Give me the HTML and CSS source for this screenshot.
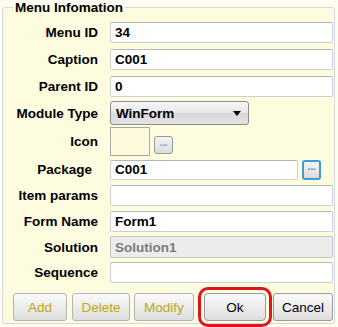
FILE: index.html
```html
<!DOCTYPE html>
<html lang="en">
<head>
  <meta charset="UTF-8">
  <title>Menu Infomation</title>
  <link rel="stylesheet" href="styles.css">
</head>
<body>

<fieldset class="group">
  <legend>Menu Infomation</legend>

  <div class="form">
    <label class="lbl">Menu ID</label>
    <input class="txt" type="text" value="34">

    <label class="lbl">Caption</label>
    <input class="txt" type="text" value="C001">

    <label class="lbl">Parent ID</label>
    <input class="txt" type="text" value="0">

    <label class="lbl">Module Type</label>
    <div class="combo">
      <span>WinForm</span>
      <span class="arrow"></span>
    </div>

    <label class="lbl">Icon</label>
    <div class="icon-cell">
      <div class="icon-box"></div>
      <button class="dots">&middot;&middot;&middot;</button>
    </div>

    <label class="lbl lbl-pkg">Package</label>
    <div class="pkg-cell">
      <input class="txt pkg" type="text" value="C001">
      <button class="dots dots-focus">&middot;&middot;&middot;</button>
    </div>

    <label class="lbl">Item params</label>
    <input class="txt" type="text" value="">

    <label class="lbl">Form Name</label>
    <input class="txt" type="text" value="Form1">

    <label class="lbl">Solution</label>
    <input class="txt txt-off" type="text" value="Solution1" disabled>

    <label class="lbl">Sequence</label>
    <input class="txt" type="text" value="">
  </div>

  <div class="actions">
    <button class="btn btn-off w-add">Add</button>
    <button class="btn btn-off w-del">Delete</button>
    <button class="btn btn-off w-mod">Modify</button>
    <button class="btn btn-ok">Ok</button>
    <button class="btn w-cancel">Cancel</button>
  </div>
</fieldset>

</body>
</html>
```

FILE: styles.css
```css
body {
  margin: 0;
  background: #fdfdf2;
  font-family: "Liberation Sans", Arial, sans-serif;
  font-size: 13.5px;
  color: #000;
}
.group {
  margin: 0 3px 3px 2px;
  padding: 3px 1px 1px 5px;
  border: 1px solid #cfd9df;
  border-radius: 3px;
  background: #fefcdf;
  height: 324px;
  box-sizing: border-box;
}
.group legend {
  margin-left: 5px;
  padding: 0 2px;
  font-weight: bold;
  line-height: 15px;
}
.form {
  display: grid;
  grid-template-columns: 90px 1fr;
  grid-template-rows: 28px 27px 26px 28px 29px 27px 25px 26px 26px 24px;
  column-gap: 12px;
  align-items: center;
}
.lbl {
  text-align: right;
  font-weight: bold;
  white-space: nowrap;
}
.lbl-pkg {
  padding-right: 6px;
}
.txt {
  box-sizing: border-box;
  width: 223px;
  height: 21px;
  margin: 0;
  padding: 0 4px;
  border: 1px solid #cbcfd3;
  border-top-color: #b3b7bb;
  border-radius: 2px;
  background: #fff;
  font: bold 13.5px "Liberation Sans", Arial, sans-serif;
  color: #000;
}
.txt-off {
  height: 22px;
  background: #ececec;
  color: #7a7a7a;
  border-color: #c4c4c4;
}
.combo {
  box-sizing: border-box;
  width: 139px;
  height: 24px;
  display: flex;
  align-items: center;
  justify-content: space-between;
  padding: 0 7px 0 5px;
  border: 1px solid #8a8a8a;
  border-radius: 3px;
  background: linear-gradient(#f7f7f7, #e6e6e6 50%, #d9d9d9 51%, #e3e3e3);
  font-weight: bold;
}
.arrow {
  width: 0;
  height: 0;
  border-left: 4px solid transparent;
  border-right: 4px solid transparent;
  border-top: 5px solid #000;
}
.icon-cell {
  display: flex;
  align-items: flex-end;
  height: 29px;
  gap: 4px;
}
.icon-box {
  box-sizing: border-box;
  width: 40px;
  height: 29px;
  border: 1px solid #a9a9a9;
  background: #fdf9dc;
}
.dots {
  box-sizing: border-box;
  width: 19px;
  height: 18px;
  margin: 0 0 2px;
  padding: 0;
  border: 1px solid #9a9a9a;
  border-radius: 3px;
  background: linear-gradient(#f4f4f4, #dcdcdc);
  color: #8aa2b8;
  font: bold 11px "Liberation Sans", Arial, sans-serif;
  line-height: 14px;
  letter-spacing: -1px;
}
.pkg-cell {
  display: flex;
  align-items: center;
  gap: 4px;
}
.pkg {
  width: 188px;
  height: 20px;
}
.dots-focus {
  height: 20px;
  margin: 0;
  border: 2px solid #3d9bd8;
  color: #6f8faa;
  line-height: 15px;
}
.actions {
  display: flex;
  margin-top: 9px;
  padding-left: 5px;
}
.btn {
  height: 28px;
  margin: 0;
  padding: 0;
  border: 1px solid #9b9b9b;
  border-radius: 3px;
  background: linear-gradient(#fafafa, #ececec 50%, #dedede);
  font: 13.5px "Liberation Sans", Arial, sans-serif;
  color: #000;
}
.btn-off {
  color: #bcaa10;
  border-color: #b5b5b5;
}
.w-add {
  width: 54px;
  margin-right: 5px;
}
.w-del {
  width: 58px;
  margin-right: 4px;
}
.w-mod {
  width: 60px;
  margin-right: 10px;
}
.btn-ok {
  width: 62px;
  margin-right: 7px;
  outline: 3px solid #e0141e;
  outline-offset: 3px;
  border-radius: 4px;
}
.w-cancel {
  width: 60px;
}
```
